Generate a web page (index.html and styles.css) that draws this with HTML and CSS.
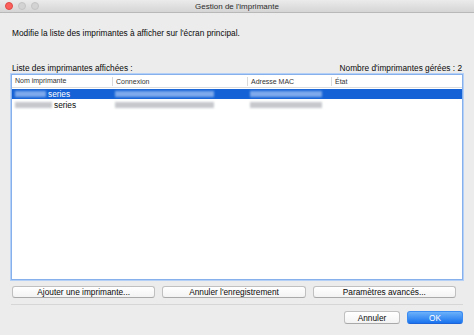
FILE: index.html
```html
<!DOCTYPE html>
<html lang="fr">

<head>
    <meta charset="UTF-8">
    <meta name="viewport" content="width=device-width, initial-scale=1.0">
    <title>Gestion de l'imprimante</title>
    <link rel="stylesheet" href="styles.css">
</head>

<body>
    <div class="window">
        <div class="titlebar">
            <div class="lights">
                <span class="light light-close"></span>
                <span class="light"></span>
                <span class="light"></span>
            </div>
            <div class="title">Gestion de l'imprimante</div>
        </div>

        <div class="content">
            <p class="intro">Modifie la liste des imprimantes à afficher sur l'écran principal.</p>

            <div class="list-head">
                <span>Liste des imprimantes affichées :</span>
                <span>Nombre d'imprimantes gérées : 2</span>
            </div>

            <div class="table">
                <div class="row row-head">
                    <div class="cell">Nom imprimante</div>
                    <div class="cell">Connexion</div>
                    <div class="cell">Adresse MAC</div>
                    <div class="cell">État</div>
                </div>
                <div class="row row-selected">
                    <div class="cell"><span class="blur blur-name"></span>series</div>
                    <div class="cell"><span class="blur blur-conn"></span></div>
                    <div class="cell"><span class="blur blur-mac"></span></div>
                    <div class="cell"></div>
                </div>
                <div class="row">
                    <div class="cell"><span class="blur blur-name blur-long"></span>series</div>
                    <div class="cell"><span class="blur blur-conn"></span></div>
                    <div class="cell"><span class="blur blur-mac"></span></div>
                    <div class="cell"></div>
                </div>
            </div>

            <div class="actions">
                <button class="btn">Ajouter une imprimante...</button>
                <button class="btn">Annuler l'enregistrement</button>
                <button class="btn">Paramètres avancés...</button>
            </div>

            <div class="footer">
                <button class="btn btn-small">Annuler</button>
                <button class="btn btn-small btn-default">OK</button>
            </div>
        </div>
    </div>
</body>

</html>
```

FILE: styles.css
```css
* {
    padding: 0;
    margin: 0;
    box-sizing: border-box;
}

body {
    width: 474px;
    height: 335px;
    background: #ececec;
    font-family: "Liberation Sans", Arial, sans-serif;
    font-size: 8.3px;
    color: #0a0a0a;
    overflow: hidden;
}

.window {
    height: 335px;
    display: flex;
    flex-direction: column;
}

/* barre de titre */
.titlebar {
    position: relative;
    height: 13px;
    display: flex;
    align-items: center;
    justify-content: center;
    background: linear-gradient(#ebebeb, #d5d5d5);
    border-bottom: 1px solid #b8b8b8;
}

.lights {
    position: absolute;
    left: 5px;
    top: 2px;
    display: flex;
    gap: 5px;
}

.light {
    width: 8px;
    height: 8px;
    border-radius: 50%;
    background: #d3d3d3;
    border: 1px solid #c4c4c4;
}

.light-close {
    background: #fc605c;
    border-color: #de4a45;
}

.title {
    font-size: 8px;
    color: #2b2b2b;
}

.content {
    flex: 1;
    display: flex;
    flex-direction: column;
    padding: 0 11px 0 11px;
}

.intro {
    margin: 15px 0 0 1px;
    line-height: 10px;
}

.list-head {
    margin: 25px 1px 0 1px;
    display: flex;
    justify-content: space-between;
    line-height: 10px;
}

/* tableau */
.table {
    margin-top: 1px;
    height: 206px;
    background: #fff;
    border: 1px solid #86b0ec;
    box-shadow: 0 0 0 1px #b5d0f6;
    display: flex;
    flex-direction: column;
    gap: 1px;
}

.row {
    display: grid;
    grid-template-columns: 100px 135px 84px 1fr;
    height: 10px;
    align-items: center;
}

.row-head {
    height: 13px;
    border-bottom: 1px solid #dcdcdc;
    font-size: 7px;
    color: #333;
}

.row-head .cell + .cell {
    border-left: 1px solid #dadada;
    height: 9px;
    line-height: 9px;
}

.cell {
    display: flex;
    align-items: center;
    padding-left: 3px;
    white-space: nowrap;
    line-height: 10px;
}

.row-selected {
    background: #1462d5;
    color: #fff;
}

.blur {
    display: inline-block;
    height: 6px;
    filter: blur(1px);
    background: #c6c8cc;
}

.blur-name {
    width: 31px;
    margin-right: 2px;
}

.blur-long {
    width: 37px;
}

.blur-conn {
    width: 99px;
}

.blur-mac {
    width: 72px;
}

.row-selected .blur {
    background: #7ea9ec;
}

/* boutons */
.actions {
    margin: 6px 7px 0 1px;
    display: flex;
    gap: 7px;
}

.btn {
    font-family: inherit;
    font-size: 8.3px;
    color: #0a0a0a;
    height: 12px;
    line-height: 10px;
    background: linear-gradient(#ffffff, #f3f3f3);
    border: 1px solid #c0c0c0;
    border-bottom-color: #a9a9a9;
    border-radius: 3px;
}

.actions .btn {
    flex: 1;
}

.footer {
    margin-top: 6px;
    padding-top: 6px;
    border-top: 1px solid #d6d6d6;
    display: flex;
    justify-content: flex-end;
    gap: 7px;
}

.btn-small {
    width: 56px;
    height: 13px;
}

.btn-default {
    color: #fff;
    background: linear-gradient(#6cb1fa, #1a74ef);
    border-color: #3b8cf2;
    border-bottom-color: #1e64d6;
}
```
